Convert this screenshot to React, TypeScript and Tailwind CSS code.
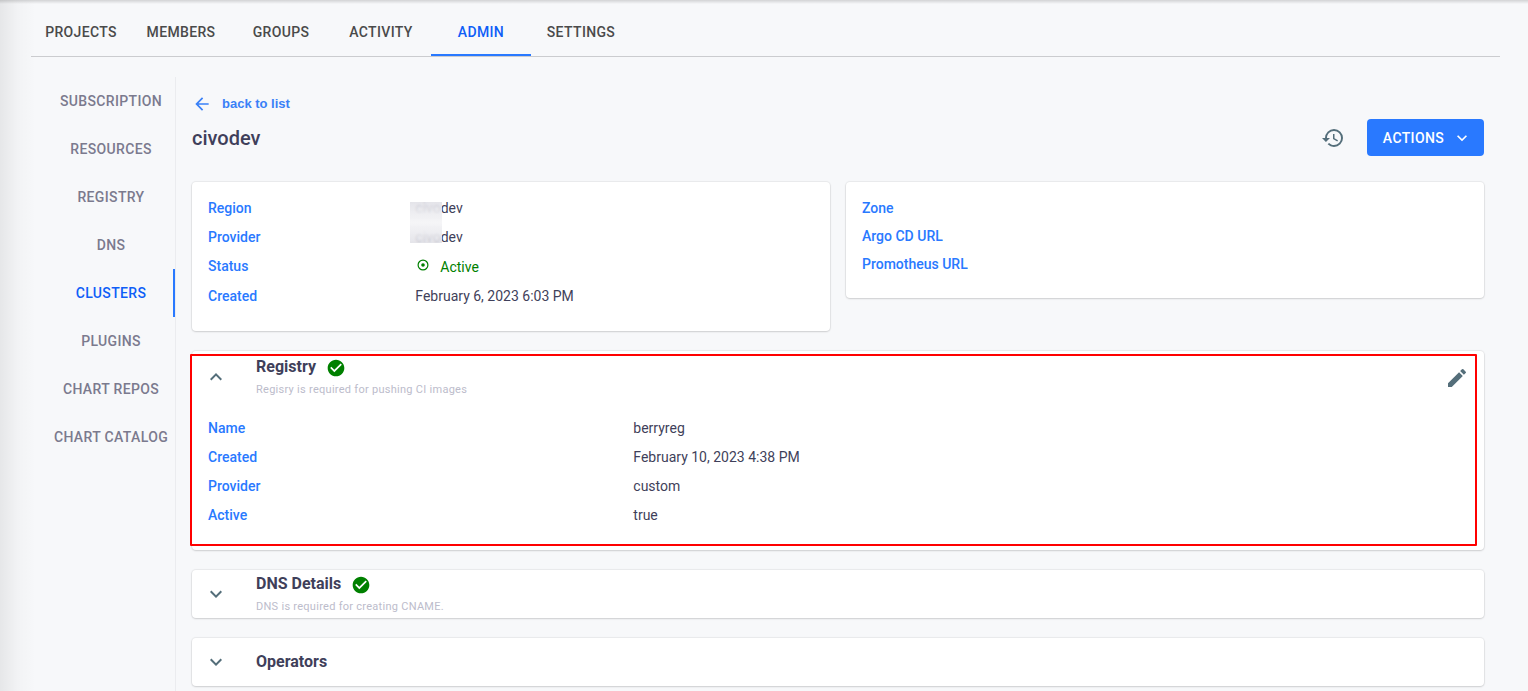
import type { ReactNode } from "react";
import {
  MdArrowBack,
  MdCheckCircle,
  MdEdit,
  MdHistory,
  MdKeyboardArrowDown,
  MdKeyboardArrowUp,
} from "react-icons/md";

const tabs = ["Projects", "Members", "Groups", "Activity", "Admin", "Settings"];

const sections = [
  "Subscription",
  "Resources",
  "Registry",
  "DNS",
  "Clusters",
  "Plugins",
  "Chart repos",
  "Chart catalog",
];

const registry = [
  { label: "Name", value: "berryreg" },
  { label: "Created", value: "February 10, 2023 4:38 PM" },
  { label: "Provider", value: "custom" },
  { label: "Active", value: "true" },
];

const Tabs = () => (
  <nav className="flex border-b border-[#cbcccf]">
    {tabs.map((tab) => (
      <a
        key={tab}
        href="#"
        className={`flex h-14 w-25 items-center justify-center border-b-2 pt-2.5 text-sm font-medium tracking-wide uppercase ${
          tab === "Admin" ? "border-[#2979ff] text-[#0f5ef7]" : "border-transparent text-[#4a4a4a]"
        }`}
      >
        {tab}
      </a>
    ))}
  </nav>
);

const Sidebar = () => (
  <nav className="w-[129px] shrink-0 border-r border-[#ebecef]">
    {sections.map((section) => (
      <a
        key={section}
        href="#"
        className={`flex h-12 items-center justify-center border-x-2 border-l-transparent text-sm font-medium tracking-wide whitespace-nowrap uppercase ${
          section === "Clusters" ? "border-r-[#2979ff] text-[#0f5ef7]" : "border-r-transparent text-[#7b7a8e]"
        }`}
      >
        {section}
      </a>
    ))}
  </nav>
);

const Card = ({ children, className = "" }: { children: ReactNode; className?: string }) => (
  <section
    className={`rounded bg-white shadow-[0_0_1px_1px_rgba(0,0,0,0.06),0_1px_2px_rgba(0,0,0,0.12)] ${className}`}
  >
    {children}
  </section>
);

const Row = ({ label, children, className = "h-[29px]" }: { label: string; children?: ReactNode; className?: string }) => (
  <div className={`grid grid-cols-3 items-center gap-x-4 text-sm ${className}`}>
    <dt className="font-medium whitespace-nowrap text-[#2979ff]">{label}</dt>
    <dd className="col-span-2">{children}</dd>
  </div>
);

type PanelHeaderProps = { title: string; note?: string; open?: boolean; done?: boolean };

const PanelHeader = ({ title, note, open, done }: PanelHeaderProps) => (
  <div className="flex h-12 items-center gap-7 pl-3">
    <button aria-label={`Toggle ${title}`} aria-expanded={!!open} className="text-[#546e7a]">
      {open ? <MdKeyboardArrowUp className="size-6" /> : <MdKeyboardArrowDown className="size-6" />}
    </button>
    <div>
      <h2 className="flex items-center gap-2.5 leading-6 font-bold">
        {title}
        {done && <MdCheckCircle className="mt-0.5 size-5 text-[#008000]" />}
      </h2>
      {note && <p className="pt-px text-[11px] leading-5 tracking-wide text-[#bcbccb]">{note}</p>}
    </div>
  </div>
);

const App = () => {
  return (
    <div className="relative flex min-h-screen flex-col bg-[#f7f8fa] pr-7 pl-[31px] font-[Roboto,sans-serif] text-[#3f3f5a]">
      {/* Shadows cast by the surrounding shell */}
      <div className="pointer-events-none absolute inset-y-0 left-0 w-9 bg-linear-to-r from-black/7 via-black/2 to-transparent" />
      <div className="pointer-events-none absolute inset-x-0 top-0 h-1 bg-linear-to-b from-black/15 to-transparent" />

      <Tabs />

      <div className="flex flex-1 pt-5 pl-4">
        <Sidebar />

        <main className="min-w-0 flex-1 px-4 pt-4">
          <a
            href="#"
            className="flex h-5.5 w-fit items-center gap-2.5 font-['Liberation_Sans',Arial,sans-serif] text-[13px] font-bold text-[#3a80f7]"
          >
            <MdArrowBack className="size-5" />
            back to list
          </a>

          <div className="flex items-center justify-between pt-1">
            <h1 className="text-xl font-medium">civodev</h1>
            <div className="flex items-center gap-5.5">
              <button aria-label="History" className="text-[#546e7a]">
                <MdHistory className="size-6" />
              </button>
              <button className="flex h-[37px] items-center gap-2 rounded bg-[#2979ff] pr-3 pl-4 text-sm font-medium tracking-wide text-white uppercase">
                Actions
                <MdKeyboardArrowDown className="size-5" />
              </button>
            </div>
          </div>

          <div className="grid grid-cols-2 items-start gap-4 pt-[26px]">
            <Card className="px-4 pt-[11px] pb-5">
              <dl>
                <Row label="Region">
                  <div className="relative">
                    civodev
                    {/* Masks the first part of both names */}
                    <div className="absolute top-1 -left-[5px] z-10 h-[41px] w-8 bg-linear-to-b from-[#e0e0e6]/85 via-[#f5f5f7] to-[#e0e0e6]/85 backdrop-blur-[1px]" />
                  </div>
                </Row>
                <Row label="Provider">civodev</Row>
                <Row label="Status">
                  <span className="flex items-center gap-2.5 pt-0.5 pl-px text-[#008000]">
                    <svg viewBox="0 0 14 14" className="mb-1 size-3.5" aria-hidden="true">
                      <circle cx="7" cy="7" r="4.9" fill="none" stroke="currentColor" strokeWidth="1.2" />
                      <circle cx="7" cy="7" r="1.8" fill="currentColor" />
                    </svg>
                    Active
                  </span>
                </Row>
                <Row label="Created" className="h-[31px]">
                  February 6, 2023 6:03 PM
                </Row>
              </dl>
            </Card>

            <Card className="px-4 pt-3 pb-5">
              <dl>
                <Row label="Zone" className="h-7" />
                <Row label="Argo CD URL" className="h-7" />
                <Row label="Promotheus URL" className="h-7" />
              </dl>
            </Card>
          </div>

          <div className="flex flex-col gap-5 pt-5">
            <Card className="relative pt-0.5">
              <div className="flex items-center justify-between pr-[15px]">
                <PanelHeader title="Registry" note="Regisry is required for pushing CI images" open done />
                <button aria-label="Edit registry" className="pt-0.5 text-[#546e7a]">
                  <MdEdit className="size-6" />
                </button>
              </div>
              <dl className="px-4 pt-3 pb-[21px]">
                {registry.map((item) => (
                  <Row key={item.label} label={item.label}>
                    {item.value}
                  </Row>
                ))}
              </dl>
              <div className="pointer-events-none absolute top-[3px] right-[7px] bottom-1 -left-0.5 rounded-[1px] border-2 border-[#ff0000]" />
            </Card>

            <Card>
              <PanelHeader title="DNS Details" note="DNS is required for creating CNAME." done />
            </Card>

            <Card>
              <PanelHeader title="Operators" />
            </Card>
          </div>
        </main>
      </div>
    </div>
  );
};

export default App;
